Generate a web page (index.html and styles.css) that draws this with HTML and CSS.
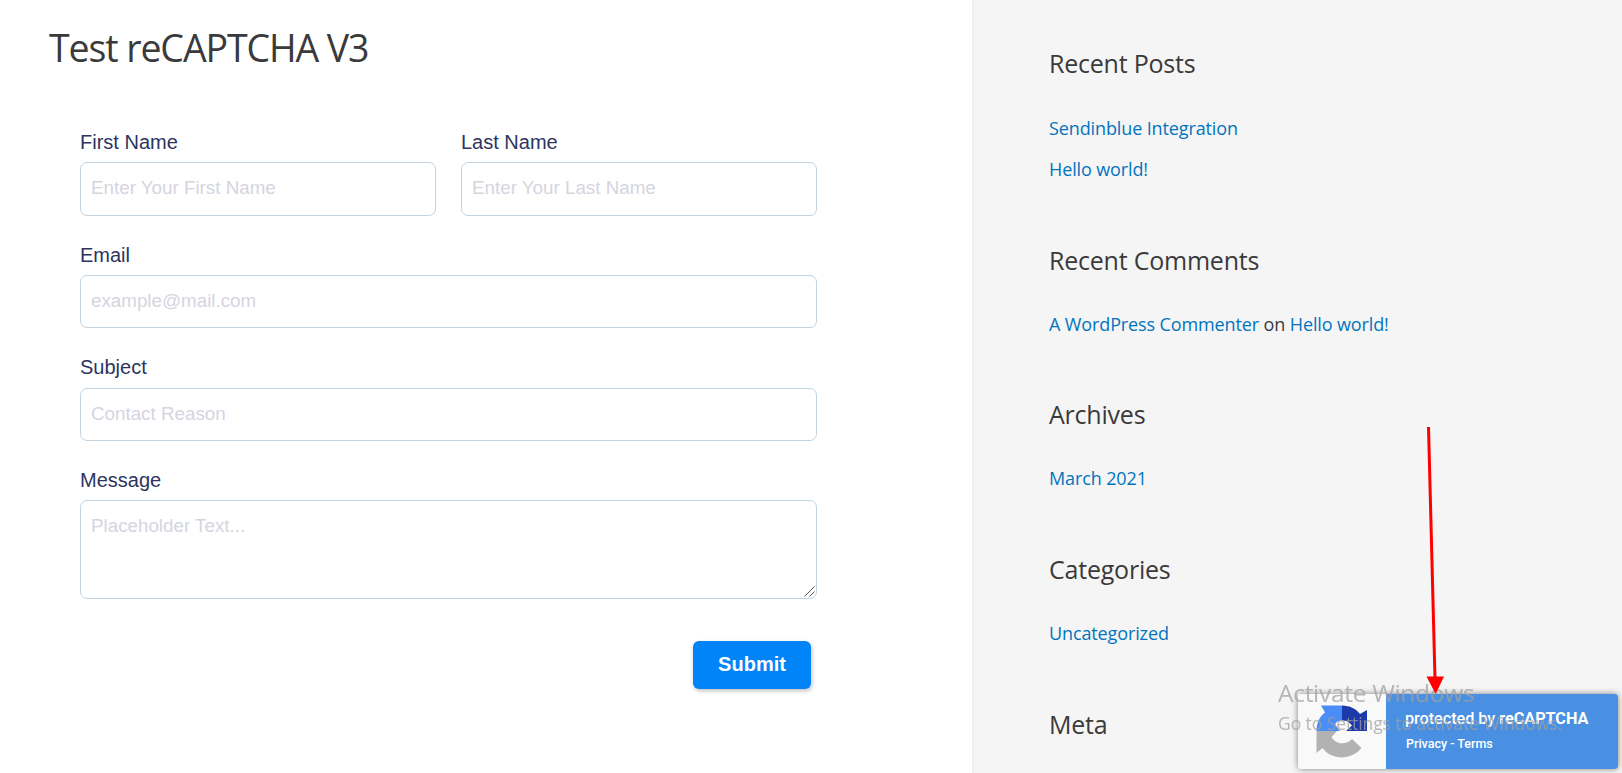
FILE: index.html
```html
<!DOCTYPE html>
<html lang="en">
<head>
<meta charset="utf-8">
<title>Test reCAPTCHA V3</title>
<link rel="stylesheet" href="styles.css">
</head>
<body>
<div class="page">
  <main class="content">
    <h1 class="title">Test reCAPTCHA V3</h1>
    <form class="form">
      <div class="row">
        <div class="field"><label class="label" for="first">First Name</label><input class="input tall" id="first" placeholder="Enter Your First Name"></div>
        <div class="field"><label class="label" for="last">Last Name</label><input class="input tall" id="last" placeholder="Enter Your Last Name"></div>
      </div>
      <div class="field"><label class="label" for="email">Email</label><input class="input" id="email" placeholder="example@mail.com"></div>
      <div class="field"><label class="label label-loose" for="subject">Subject</label><input class="input" id="subject" placeholder="Contact Reason"></div>
      <div class="field area-field"><label class="label" for="message">Message</label><textarea class="input area" id="message" placeholder="Placeholder Text..."></textarea>
        <svg class="grip" width="11" height="11" viewBox="0 0 11 11"><path d="M.5 10.500L10.500 .5M5.500 10.500L10.500 5.500" stroke="#555" stroke-width="1"/></svg>
      </div>
      <button class="submit" type="button">Submit</button>
    </form>
  </main>
  <aside class="sidebar">
    <section class="widget">
      <h2 class="heading">Recent Posts</h2>
      <ul class="list">
        <li class="item"><a class="link">Sendinblue Integration</a></li>
        <li class="item"><a class="link">Hello world!</a></li>
      </ul>
    </section>
    <section class="widget">
      <h2 class="heading">Recent Comments</h2>
      <ul class="list"><li class="item"><a class="link">A WordPress Commenter</a> on <a class="link">Hello world!</a></li></ul>
    </section>
    <section class="widget">
      <h2 class="heading">Archives</h2>
      <ul class="list"><li class="item"><a class="link">March 2021</a></li></ul>
    </section>
    <section class="widget">
      <h2 class="heading">Categories</h2>
      <ul class="list"><li class="item"><a class="link">Uncategorized</a></li></ul>
    </section>
    <section class="widget">
      <h2 class="heading">Meta</h2>
    </section>
  </aside>
</div>

<div class="badge">
  <div class="badge-logo">
    <svg width="52" height="53" viewBox="0 0 52 53">
      <path fill="#4a8df6" d="M5 .5H26V15.500C21 15.500 19 18 19.500 20L24 26H.5C.5 19 3 12 9 7.500Z"/>
      <path fill="#1c3aa9" d="M26 .5C34 .5 40 4 44 9L51 5V26H30L36 20.500C33 16.500 30 15.500 26 15.500Z"/>
      <path fill="#b2b2b2" d="M.5 26H21L15.500 32C20 40 31 40 36 34L45.500 43C35 56 15 55 6.500 43L.5 48Z"/>
    </svg>
  </div>
  <div class="badge-text">
    <div class="badge-main">protected by <b class="badge-strong">reCAPTCHA</b></div>
    <div class="badge-links">Privacy - Terms</div>
  </div>
</div>

<div class="watermark">
  <div class="wm-title">Activate Windows</div>
  <div class="wm-text">Go to Settings to activate Windows.</div>
</div>

<svg class="arrow" width="24" height="270" viewBox="0 0 24 270">
  <path d="M4.500 2L11 254" stroke="#f00" stroke-width="3"/>
  <path d="M2.500 251.500H20L11.700 269Z" fill="#f00"/>
</svg>
</body>
</html>
```
FILE: styles.css
```css
* { box-sizing: border-box; }
body { margin: 0; overflow: hidden; background: #fff; font-family: "Liberation Sans", Arial, sans-serif; }
.page { display: flex; height: 773px; overflow: hidden; }
.content { width: 972px; flex: none; padding: 20px 0 0 49px; }
.title { margin: 0; height: 56px; font: 400 37.500px/56px "Open Sans", sans-serif; letter-spacing: -1.1px; color: #3a3a3a; white-space: nowrap; }
.form { width: 768px; padding: 51px 0 0 31px; display: flex; flex-direction: column; gap: 24px; }
.row { display: flex; gap: 25px; }
.row .field { flex: 1; }
.field { display: flex; flex-direction: column; }
.label { line-height: 30px; margin-bottom: 5px; font-size: 20px; color: #2c345f; }
.label-loose { margin-bottom: 6px; }
.input { display: block; width: 100%; height: 53px; margin: 0; padding: 0 10px 2px; border: 1px solid #c3d2df; border-radius: 7px; background: #fff; font: 18.800px/27px "Liberation Sans", Arial, sans-serif; outline: none; }
.tall { height: 54px; }
.area { height: 99px; padding-top: 11px; resize: none; }
.area-field { position: relative; }
.grip { position: absolute; right: 2px; bottom: 2px; }
.input::placeholder { color: #d5d5df; opacity: 1; }
.submit { align-self: flex-end; width: 118px; height: 48px; margin: 18px 6px 0 0; padding: 0 0 1px; border: 0; border-radius: 6px; background: #0084f7; color: #fff; font: bold 20px "Liberation Sans", Arial, sans-serif; box-shadow: 1px 2px 4px rgba(0,0,0,.25); }
.sidebar { flex: 1; padding: 43.300px 0 0 75px; border-left: 2px solid #f0f0f0; background: #f5f5f5; font-family: "Open Sans", sans-serif; color: #3a3a3a; }
.widget { margin-bottom: 49.700px; }
.widget:first-child { margin-bottom: 50.400px; }
.heading { margin: 0 0 24px; font-size: 25px; line-height: 40px; font-weight: 400; letter-spacing: -0.22px; }
.list { margin: 0; padding: 0; list-style: none; }
.item { height: 41px; font-size: 18px; line-height: 40px; letter-spacing: -0.12px; white-space: nowrap; }
.widget:first-child .item { line-height: 42px; }
.link { color: #0274be; }
.badge { position: fixed; right: 4px; bottom: 4px; width: 320px; height: 75px; display: flex; overflow: hidden; border-radius: 3px; box-shadow: 0 0 6px #808080; color: #fff; font-family: Roboto, sans-serif; }
.badge-logo { width: 88px; padding: 11px 0 0 18px; background: #f9f9f9; }
.badge-text { flex: 1; padding: 14px 0 0 19px; background: #4a90e2; white-space: nowrap; }
.badge-main { font-size: 16.250px; font-weight: 500; line-height: 22px; letter-spacing: -0.05px; }
.badge-strong { font-weight: 700; }
.badge-links { padding-left: 1px; margin-top: 6px; font-size: 12.500px; font-weight: 500; line-height: 16px; }
.watermark { position: fixed; left: 1278px; top: 675px; color: rgba(160,160,160,.75); font-family: "Open Sans", sans-serif; white-space: nowrap; }
.wm-title { font-size: 24.500px; line-height: 36px; letter-spacing: -0.3px; }
.wm-text { font-size: 17.500px; line-height: 24px; letter-spacing: -0.08px; }
.arrow { position: fixed; left: 1424px; top: 425px; }
```
